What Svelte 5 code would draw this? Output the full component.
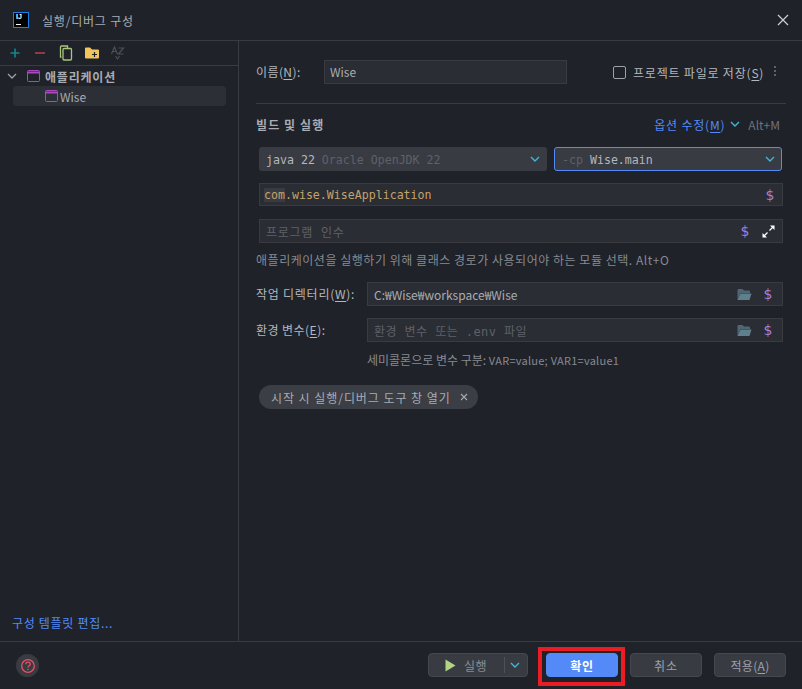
<script>
  let items = [{ name: 'Wise' }];
  let showOpen = $state(true);
</script>

<div class="dialog">
  <header class="titlebar">
    <div class="logo"><span class="ij">IJ</span><span class="bar"></span></div>
    <span class="title">실행/디버그 구성</span>
    <svg class="close" width="12" height="12" viewBox="0 0 12 12"><path d="M1 1l10 10M11 1L1 11" stroke="#ced0d6" stroke-width="1.2" fill="none"/></svg>
  </header>

  <div class="body">
    <aside class="side">
      <div class="tools">
        <svg width="16" height="16" viewBox="0 0 16 16"><path d="M8 3.500v9M3.500 8h9" stroke="#14868c" stroke-width="1.6"/></svg>
        <svg class="t2" width="16" height="16" viewBox="0 0 16 16"><path d="M3 8h10" stroke="#9c3f47" stroke-width="1.8"/></svg>
        <svg class="t3" width="16" height="16" viewBox="0 0 16 16" fill="none" stroke="#a8c77d" stroke-width="1.3"><path d="M3.500 12h-1V2q0-1 1-1h6v2"/><rect x="5" y="3.500" width="8.500" height="11.500" rx="1"/></svg>
        <svg class="t4" width="16" height="16" viewBox="0 0 16 16"><path d="M1 3.500q0-1 1-1h4l2 2h6q1 0 1 1v7q0 1-1 1H2q-1 0-1-1z" fill="#f2c55c"/><path d="M10.500 7v5M8 9.500h5" stroke="#1f2229" stroke-width="1.2"/></svg>
        <svg class="t5" width="16" height="16" viewBox="0 0 16 16" fill="none" stroke="#4c4f55" stroke-width="1.2"><path d="M1.500 9L4.500 2l3 7M2.600 6.500h3.800M8.500 3h5l-5 6h5M5.500 11l2 3 2-3"/></svg>
      </div>
      <div class="tree">
        <div class="group">
          <svg width="12" height="12" viewBox="0 0 12 12"><path d="M2 4l4 4 4-4" stroke="#9da0a8" stroke-width="1.3" fill="none"/></svg>
          <svg class="win" width="13" height="12" viewBox="0 0 13 12"><rect x=".5" y=".5" width="12" height="11" rx="1" fill="none" stroke="#a948bf"/><path d="M.5 2.500h12" stroke="#a948bf" stroke-width="2"/></svg>
          <span>애플리케이션</span>
        </div>
        {#each items as item}
          <div class="leaf">
            <svg class="win" width="13" height="12" viewBox="0 0 13 12"><rect x=".5" y=".5" width="12" height="11" rx="1" fill="none" stroke="#a948bf"/><path d="M.5 2.500h12" stroke="#a948bf" stroke-width="2"/></svg>
            <span>{item.name}</span>
          </div>
        {/each}
      </div>
      <a class="edit" href="#top">구성 템플릿 편집...</a>
    </aside>

    <main class="form">
      <div class="row-name">
        <label class="name-label" for="nm"><span>이름(<u>N</u>):</span></label>
        <input id="nm" class="field name" value="Wise" />
        <span class="check"></span>
        <span class="check-label">프로젝트 파일로 저장(<u>S</u>)</span>
        <svg class="kebab" width="4" height="12" viewBox="0 0 4 12"><g fill="#5f6268"><rect x="1" y="0" width="2" height="2"/><rect x="1" y="4" width="2" height="2"/><rect x="1" y="8" width="2" height="2"/></g></svg>
      </div>
      <hr />
      <div class="section">
        <span class="sec-title">빌드 및 실행</span>
        <span class="options">옵션 수정(<u>M</u>)</span>
        <svg class="chev" width="10" height="10" viewBox="0 0 10 10"><path d="M1 3l4 4 4-4" stroke="#3fb6d8" stroke-width="1.4" fill="none"/></svg>
        <span class="shortcut">Alt+M</span>
      </div>

      <div class="selects">
        <div class="select jdk">
          <span class="mono"><b>java 22</b> <i>Oracle OpenJDK 22</i></span>
          <svg width="10" height="10" viewBox="0 0 10 10"><path d="M1 3l4 4 4-4" stroke="#3fb6d8" stroke-width="1.4" fill="none"/></svg>
        </div>
        <div class="select cp">
          <span class="mono"><i>-cp</i> <b>Wise.main</b></span>
          <svg width="10" height="10" viewBox="0 0 10 10"><path d="M1 3l4 4 4-4" stroke="#3fb6d8" stroke-width="1.4" fill="none"/></svg>
        </div>
      </div>

      <div class="box main-class">
        <span class="mono klass"><em>com</em>.wise.WiseApplication</span>
        <span class="dollar">$</span>
      </div>

      <div class="box args">
        <span class="mono ph">프로그램 인수</span>
        <span class="dollar">$</span>
        <svg class="expand" width="13" height="13" viewBox="0 0 13 13"><path d="M8 .5h4.500V5zM5 12.500H.5V8z" fill="#fff"/><path d="M11 2L7.500 5.500M2 11l3.500-3.500" stroke="#fff" stroke-width="1.300"/></svg>
      </div>

      <p class="hint">애플리케이션을 실행하기 위해 클래스 경로가 사용되어야 하는 모듈 선택. Alt+O</p>

      <div class="labeled work">
        <span class="lbl"><span>작업 디렉터리(<u>W</u>):</span></span>
        <div class="box grow">
          <span class="val">C:₩Wise₩workspace₩Wise</span>
          <svg class="folder" width="15" height="13" viewBox="0 0 15 13"><path d="M.5 2q0-1 1-1h4l1.500 1.500h5q1 0 1 1V5H3.500L.5 11z" fill="#4d6773"/><path d="M3.500 5.500h11L12.500 12H1.500q-1 0-1-.5z" fill="#5f7f8d"/></svg>
          <span class="dollar">$</span>
        </div>
      </div>
      <div class="labeled env">
        <span class="lbl"><span>환경 변수(<u>E</u>):</span></span>
        <div class="box grow">
          <span class="mono ph">환경 변수 또는 .env 파일</span>
          <svg class="folder" width="15" height="13" viewBox="0 0 15 13"><path d="M.5 2q0-1 1-1h4l1.500 1.500h5q1 0 1 1V5H3.500L.5 11z" fill="#4d6773"/><path d="M3.500 5.500h11L12.500 12H1.500q-1 0-1-.5z" fill="#5f7f8d"/></svg>
          <span class="dollar">$</span>
        </div>
      </div>
      <p class="sub"><span class="ko">세미콜론으로 변수 구분:</span> VAR=value; VAR1=value1</p>

      {#if showOpen}
        <div class="chip">
          <span>시작 시 실행/디버그 도구 창 열기</span>
          <svg width="8" height="8" viewBox="0 0 8 8"><path d="M1 1l6 6M7 1L1 7" stroke="#a8abb0" stroke-width="1.100"/></svg>
        </div>
      {/if}
    </main>
  </div>

  <footer class="footer">
    <div class="help">
      <svg width="16" height="16" viewBox="0 0 16 16" fill="none" stroke="#e8506c" stroke-width="1.300"><circle cx="8" cy="8" r="6.300"/><path d="M5.800 6.300q0-2.100 2.200-2.100t2.200 2q0 1-1.100 1.600T8 9.500"/><path d="M8 10.700v1.300"/></svg>
    </div>
    <div class="buttons">
      <div class="btn run">
        <svg width="11" height="13" viewBox="0 0 11 13"><path d="M.5.500l10 6-10 6z" fill="#b2d584"/></svg>
        <span class="run-text">실행</span>
        <span class="sep"></span>
        <svg class="run-chev" width="10" height="10" viewBox="0 0 10 10"><path d="M1 3l4 4 4-4" stroke="#3fb6d8" stroke-width="1.400" fill="none"/></svg>
      </div>
      <div class="ok-wrap">
        <div class="btn ok">확인</div>
        <span class="mark"></span>
      </div>
      <div class="btn cancel">취소</div>
      <div class="btn apply">적용(<u>A</u>)</div>
    </div>
  </footer>
</div>

<style>
  :global(body) {
    margin: 0;
    background: #1f2229;
  }

  .dialog {
    width: 802px;
    height: 689px;
    display: flex;
    flex-direction: column;
    background: #1f2229;
    color: #b4b7bd;
    font-family: "Noto Sans CJK KR", "Noto Sans", sans-serif;
    font-size: 12px;
    overflow: hidden;
  }

  u {
    text-underline-offset: 2px;
  }

  .titlebar {
    height: 40px;
    flex: none;
    display: flex;
    align-items: center;
    padding: 0 13px;
    border-bottom: 1px solid #393b40;
  }

  .logo {
    width: 14px;
    height: 14px;
    background: #000;
    border: 1px solid #1b7fe8;
    position: relative;
    margin-top: -1px;
  }

  .ij {
    position: absolute;
    left: 2px;
    top: 0;
    font: bold 7px/8px "Liberation Sans", sans-serif;
    color: #fff;
  }

  .bar {
    position: absolute;
    left: 2px;
    bottom: 2px;
    width: 5px;
    height: 1px;
    background: #fff;
  }

  .title {
    margin-left: 13px;
    color: #a9acb2;
    letter-spacing: .8px;
  }

  .close {
    margin-left: auto;
  }

  .body {
    flex: 1;
    display: flex;
    min-height: 0;
    border-bottom: 1px solid #393b40;
  }

  .side {
    width: 238px;
    flex: none;
    display: flex;
    flex-direction: column;
    border-right: 1px solid #393b40;
  }

  .tools {
    height: 24px;
    flex: none;
    display: flex;
    align-items: center;
    padding-left: 7px;
    border-bottom: 1px solid #393b40;
  }

  .t2 { margin-left: 9px; }
  .t3 { margin-left: 10px; }
  .t4 { margin-left: 10px; }
  .t5 { margin-left: 10px; }

  .group {
    height: 20px;
    display: flex;
    align-items: center;
    padding-left: 6px;
    font-weight: 700;
    color: #a9acb2;
  }

  .group .win {
    margin-left: 9px;
  }

  .group span {
    margin-left: 5px;
    letter-spacing: .8px;
  }

  .leaf {
    height: 20px;
    margin: 0 12px 0 13px;
    display: flex;
    align-items: center;
    padding-left: 32px;
    background: #2c2f36;
    border-radius: 4px;
    color: #a9acb2;
  }

  .leaf span {
    margin-left: 2px;
  }

  .edit {
    margin-top: auto;
    margin-bottom: 10px;
    margin-left: 12px;
    color: #548af7;
    text-decoration: none;
    letter-spacing: .7px;
  }

  .form {
    flex: 1;
    min-width: 0;
    padding: 19px 16px 0 17px;
  }

  .row-name {
    height: 24px;
    display: flex;
    align-items: center;
  }

  .name-label {
    width: 68px;
    flex: none;
    padding-bottom: 2px;
    letter-spacing: .4px;
  }

  .field {
    box-sizing: border-box;
    width: 243px;
    height: 24px;
    background: #2a2d34;
    border: 1px solid #393b40;
    color: #a9acb2;
    font: inherit;
    padding: 0 5px 1px;
    outline: none;
  }

  .check {
    box-sizing: border-box;
    width: 13px;
    height: 13px;
    margin-left: 46px;
    border: 1.500px solid #9da0a8;
    border-radius: 2px;
  }

  .check-label {
    margin-left: 7px;
    letter-spacing: .8px;
  }

  .kebab {
    margin-left: 9px;
  }

  hr {
    border: 0;
    height: 1px;
    background: #393b40;
    margin: 19px 0 0 0;
  }

  .section {
    height: 20px;
    margin-top: 10px;
    display: flex;
    align-items: center;
    padding-right: 6px;
  }

  .sec-title {
    font-weight: 700;
    color: #a9acb2;
    letter-spacing: 1.100px;
  }

  .options {
    margin-left: auto;
    color: #548af7;
    letter-spacing: .8px;
  }

  .chev {
    margin-left: 5px;
  }

  .shortcut {
    margin-left: 8px;
    color: #6f737a;
  }

  .selects {
    display: flex;
    gap: 7px;
    margin: 13px 4px 0 3px;
  }

  .select {
    box-sizing: border-box;
    height: 24px;
    display: flex;
    align-items: center;
    justify-content: space-between;
    background: #393b43;
    border-radius: 3px;
    padding: 0 7px;
  }

  .select .mono {
    padding-top: 1px;
  }

  .jdk {
    width: 288px;
  }

  .cp {
    flex: 1;
    border: 1px solid #548af7;
    padding: 0 6px 0 7px;
  }

  .mono {
    font-family: "DejaVu Sans Mono", "Noto Sans CJK KR", monospace;
    font-size: 11.600px;
    white-space: pre;
  }

  .mono b {
    font-weight: 400;
    color: #b4b7bd;
  }

  .mono i {
    font-style: normal;
    color: #5e6168;
  }

  .box {
    box-sizing: border-box;
    height: 24px;
    display: flex;
    align-items: center;
    background: #2a2d34;
    border: 1px solid #393b40;
    padding: 0 4px;
  }

  .main-class {
    height: 23px;
    margin: 12px 3px 0 3px;
  }

  .args {
    margin: 13px 3px 0 3px;
    padding-left: 6px;
  }

  .klass {
    color: #c6a26b;
  }

  .klass em {
    font-style: normal;
    background: #393b43;
  }

  .ph {
    color: #5e6168;
    font-size: 12px;
  }

  .args .ph {
    letter-spacing: .7px;
  }

  .env .ph {
    letter-spacing: .43px;
  }

  .dollar {
    margin-left: auto;
    width: 14px;
    text-align: center;
    color: #a57fdb;
    font: 400 14px "DejaVu Sans", sans-serif;
  }

  .main-class .dollar {
    margin-right: 1px;
  }

  .args .dollar {
    margin-right: 10px;
  }

  .expand {
    margin-right: 3px;
  }

  .hint {
    margin: 8px 0 0 0;
    height: 18px;
    line-height: 18px;
    font-size: 12px;
    letter-spacing: .53px;
    color: #868a91;
  }

  .labeled {
    display: flex;
    align-items: center;
    margin: 13px 3px 0 0;
  }

  .env {
    margin-top: 12px;
  }

  .lbl {
    width: 111px;
    flex: none;
    padding-bottom: 2px;
    color: #b4b7bd;
  }

  .work .lbl {
    letter-spacing: .75px;
  }

  .env .lbl {
    letter-spacing: .45px;
  }

  .grow {
    flex: 1;
    padding-left: 6px;
  }

  .val {
    color: #a9acb2;
  }

  .folder {
    margin-left: auto;
  }

  .grow .dollar {
    margin-left: 9px;
    margin-right: 3px;
  }

  .sub {
    margin: 9px 0 0 111px;
    height: 18px;
    line-height: 18px;
    font-size: 11px;
    letter-spacing: .25px;
    color: #868a91;
  }

  .ko {
    font-size: 12px;
    letter-spacing: 0;
  }

  .chip {
    display: flex;
    align-items: center;
    gap: 9px;
    width: fit-content;
    height: 24px;
    margin: 16px 0 0 3px;
    padding: 0 10px 0 12px;
    background: #3b3e45;
    border-radius: 12px;
    color: #a9acb2;
    letter-spacing: .95px;
  }

  .footer {
    height: 47px;
    flex: none;
    box-sizing: border-box;
    display: flex;
    align-items: flex-start;
    justify-content: space-between;
    padding: 11px 16px 0;
  }

  .help {
    width: 23px;
    height: 23px;
    margin-top: 1px;
    display: flex;
    align-items: center;
    justify-content: center;
    border-radius: 50%;
    background: #393b40;
  }

  .buttons {
    display: flex;
    align-items: center;
  }

  .btn {
    box-sizing: border-box;
    width: 72px;
    height: 24px;
    display: flex;
    align-items: center;
    justify-content: center;
    background: #393b43;
    border: 1px solid #45484f;
    border-radius: 4px;
    color: #9da0a8;
    margin-left: 12px;
  }

  .run {
    width: 100px;
    margin-left: 0;
    justify-content: flex-start;
    padding-left: 16px;
    color: #8a8d93;
  }

  .run-text {
    margin-left: 8px;
    letter-spacing: .5px;
  }

  .sep {
    width: 1px;
    height: 16px;
    margin-left: 17px;
    background: #4e5157;
  }

  .run-chev {
    margin-left: 5px;
  }

  .ok-wrap {
    position: relative;
    margin-left: 18px;
  }

  .ok {
    margin-left: 0;
    background: #548af7;
    border-color: #548af7;
    color: #fff;
    font-weight: 700;
    letter-spacing: .8px;
  }

  .cancel {
    letter-spacing: 1px;
  }

  .apply {
    letter-spacing: .3px;
  }

  .mark {
    position: absolute;
    left: -8px;
    top: -6px;
    width: 87px;
    height: 39px;
    box-sizing: border-box;
    border: 4px solid #ec1c24;
    pointer-events: none;
  }
</style>
